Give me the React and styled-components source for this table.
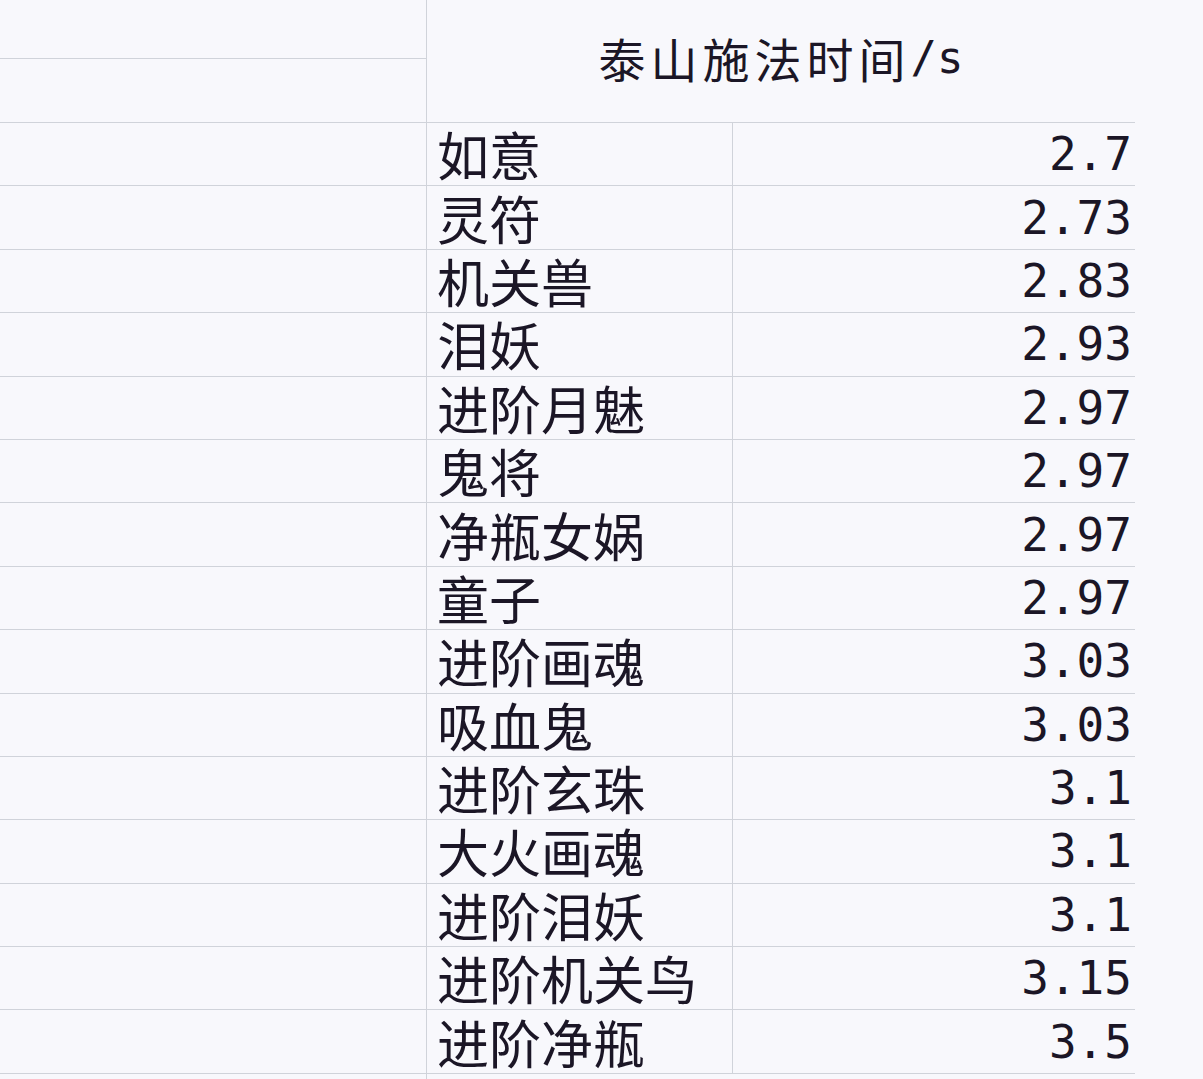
import React from 'react'
import styled, { createGlobalStyle } from 'styled-components'

const GlobalStyle = createGlobalStyle`
    html, body {
        margin: 0;
        padding: 0;
        background: #f8f8fc;
    }
`

const rows = [
    ['如意', '2.7'],
    ['灵符', '2.73'],
    ['机关兽', '2.83'],
    ['泪妖', '2.93'],
    ['进阶月魅', '2.97'],
    ['鬼将', '2.97'],
    ['净瓶女娲', '2.97'],
    ['童子', '2.97'],
    ['进阶画魂', '3.03'],
    ['吸血鬼', '3.03'],
    ['进阶玄珠', '3.1'],
    ['大火画魂', '3.1'],
    ['进阶泪妖', '3.1'],
    ['进阶机关鸟', '3.15'],
    ['进阶净瓶', '3.5'],
]

const LINE = '#d0d3da'
const ROW_H = 63.4

const Sheet = styled.div`
    display: flex;
    width: 1203px;
    height: 1079px;
    overflow: hidden;
    background: #f8f8fc;
    color: #1b1626;
`

const SideColumn = styled.div`
    width: 427px;
    flex: none;
    box-sizing: border-box;
    border-right: 1px solid ${LINE};
`

const SideCell = styled.div`
    box-sizing: border-box;
    height: ${p => p.$h}px;
    border-bottom: 1px solid ${LINE};
`

const Table = styled.div`
    width: 708px;
    flex: none;
`

const Header = styled.div`
    box-sizing: border-box;
    height: 123px;
    border-bottom: 1px solid ${LINE};
    display: flex;
    align-items: center;
    justify-content: center;
    padding-bottom: 6px;
    font-family: "Noto Sans CJK SC", sans-serif;
    font-size: 47px;
    line-height: 60px;
    letter-spacing: 5px;
`

const Unit = styled.span`
    font-family: "DejaVu Sans Mono", monospace;
    font-size: 44px;
    letter-spacing: 0;
`

const Row = styled.div`
    display: grid;
    grid-template-columns: 306px 1fr;
    box-sizing: border-box;
    height: ${ROW_H}px;
    border-bottom: 1px solid ${LINE};
`

const NameCell = styled.div`
    box-sizing: border-box;
    border-right: 1px solid ${LINE};
    padding-left: 10px;
    display: flex;
    align-items: center;
    font-family: "Noto Sans CJK SC", sans-serif;
    font-size: 52px;
    line-height: 60px;
    white-space: nowrap;
`

const ValueCell = styled.div`
    display: flex;
    align-items: center;
    justify-content: flex-end;
    padding-right: 3px;
    font-family: "DejaVu Sans Mono", monospace;
    font-size: 46px;
    line-height: 60px;
    white-space: pre;
`

const Margin = styled.div`
    flex: 1;
`

const App = () => (
    <Sheet>
        <GlobalStyle />
        <SideColumn>
            <SideCell $h={59} />
            <SideCell $h={64} />
            {rows.map((r, i) => (
                <SideCell key={i} $h={ROW_H} />
            ))}
        </SideColumn>
        <Table>
            <Header>
                泰山施法时间<Unit>/s</Unit>
            </Header>
            {rows.map(([name, value], i) => (
                <Row key={i}>
                    <NameCell>{name}</NameCell>
                    <ValueCell>{value}</ValueCell>
                </Row>
            ))}
        </Table>
        <Margin />
    </Sheet>
)

export default App
